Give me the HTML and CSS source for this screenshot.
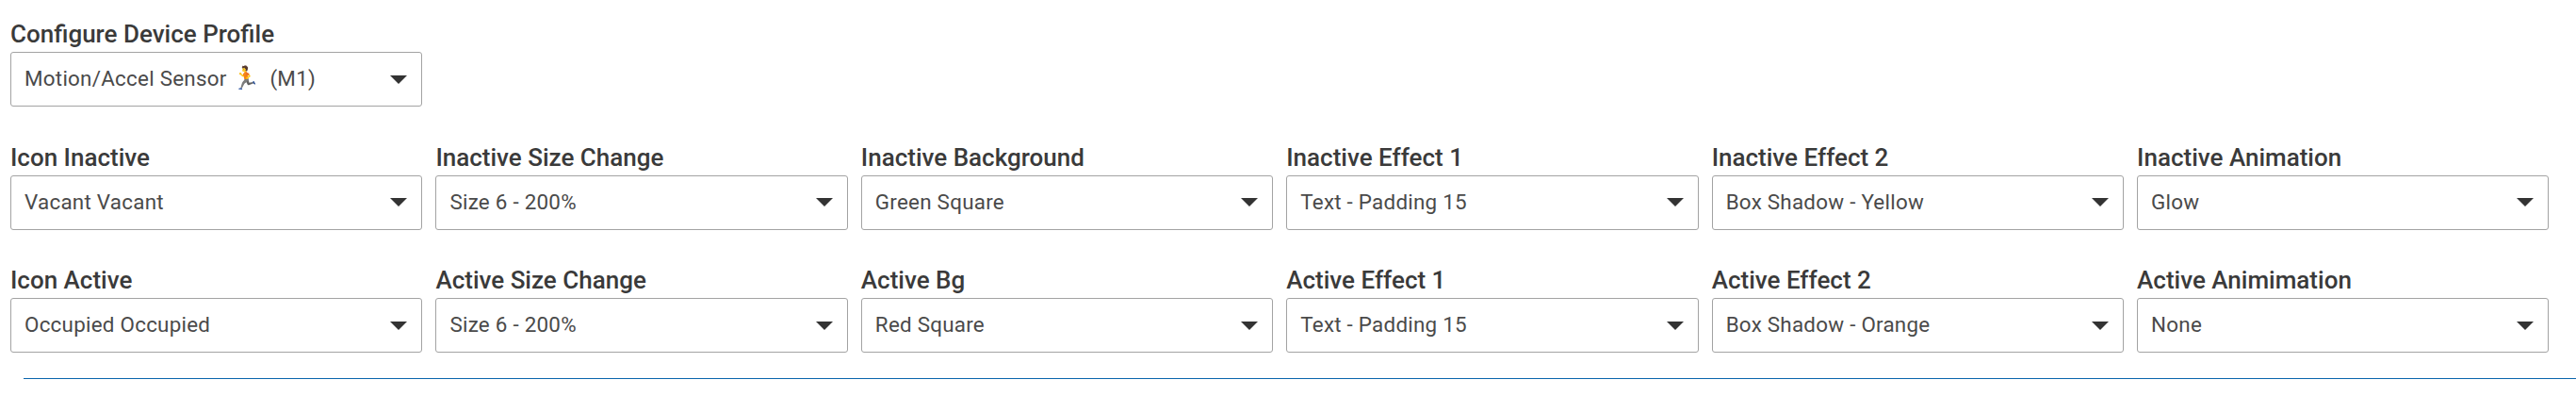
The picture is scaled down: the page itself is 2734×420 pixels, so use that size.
FILE: index.html
```html
<!DOCTYPE html>
<html lang="en">
<head>
  <meta charset="UTF-8" />
  <title>Configure Device Profile</title>
  <link rel="stylesheet" href="styles.css">
</head>
<body>
  <div class="row">
    <div class="field">
      <label class="field-label">Configure Device Profile</label>
      <div class="select"><span class="value">Motion/Accel Sensor <span class="emoji">🏃</span> (M1)</span><i class="caret"></i></div>
    </div>
  </div>

  <div class="row">
    <div class="field"><label class="field-label">Icon Inactive</label><div class="select"><span class="value">Vacant Vacant</span><i class="caret"></i></div></div>
    <div class="field"><label class="field-label">Inactive Size Change</label><div class="select"><span class="value">Size 6 - 200%</span><i class="caret"></i></div></div>
    <div class="field"><label class="field-label">Inactive Background</label><div class="select"><span class="value">Green Square</span><i class="caret"></i></div></div>
    <div class="field"><label class="field-label">Inactive Effect 1</label><div class="select"><span class="value">Text - Padding 15</span><i class="caret"></i></div></div>
    <div class="field"><label class="field-label">Inactive Effect 2</label><div class="select"><span class="value">Box Shadow - Yellow</span><i class="caret"></i></div></div>
    <div class="field"><label class="field-label">Inactive Animation</label><div class="select"><span class="value">Glow</span><i class="caret"></i></div></div>
  </div>

  <div class="row">
    <div class="field"><label class="field-label">Icon Active</label><div class="select"><span class="value">Occupied Occupied</span><i class="caret"></i></div></div>
    <div class="field"><label class="field-label">Active Size Change</label><div class="select"><span class="value">Size 6 - 200%</span><i class="caret"></i></div></div>
    <div class="field"><label class="field-label">Active Bg</label><div class="select"><span class="value">Red Square</span><i class="caret"></i></div></div>
    <div class="field"><label class="field-label">Active Effect 1</label><div class="select"><span class="value">Text - Padding 15</span><i class="caret"></i></div></div>
    <div class="field"><label class="field-label">Active Effect 2</label><div class="select"><span class="value">Box Shadow - Orange</span><i class="caret"></i></div></div>
    <div class="field"><label class="field-label">Active Animimation</label><div class="select"><span class="value">None</span><i class="caret"></i></div></div>
  </div>

  <div class="panel-edge"></div>
</body>
</html>
```

FILE: styles.css
```css
html, body {
  height: 100%;
}

body {
  margin: 0;
  padding: 18px 28.5px 0 11px;
  box-sizing: border-box;
  overflow: hidden;
  background: #fff;
  color: #3a3a3a;
  font-family: Roboto, sans-serif;
}

.row {
  display: grid;
  grid-template-columns: repeat(6, 1fr);
  column-gap: 14px;
}

.row + .row {
  margin-top: 35.5px;
}

.field-label {
  display: block;
  font-size: 26px;
  font-weight: 500;
  line-height: 37px;
}

.select {
  display: flex;
  align-items: center;
  justify-content: space-between;
  height: 58px;
  padding: 0 15px 0 14px;
  box-sizing: border-box;
  border: 1px solid #a3a3a3;
  border-radius: 3px;
  color: #4a4a4a;
  font-size: 22.4px;
  letter-spacing: 0.25px;
}

.value {
  padding-bottom: 2px;
}

.emoji {
  margin-right: 4px;
  font-size: 24px;
}

.caret {
  width: 0;
  height: 0;
  border-left: 9px solid transparent;
  border-right: 9px solid transparent;
  border-top: 9px solid #333;
}

.panel-edge {
  margin: 27px -28.5px 0 14px;
  border-top: 1px solid #0b65ad;
}
```
